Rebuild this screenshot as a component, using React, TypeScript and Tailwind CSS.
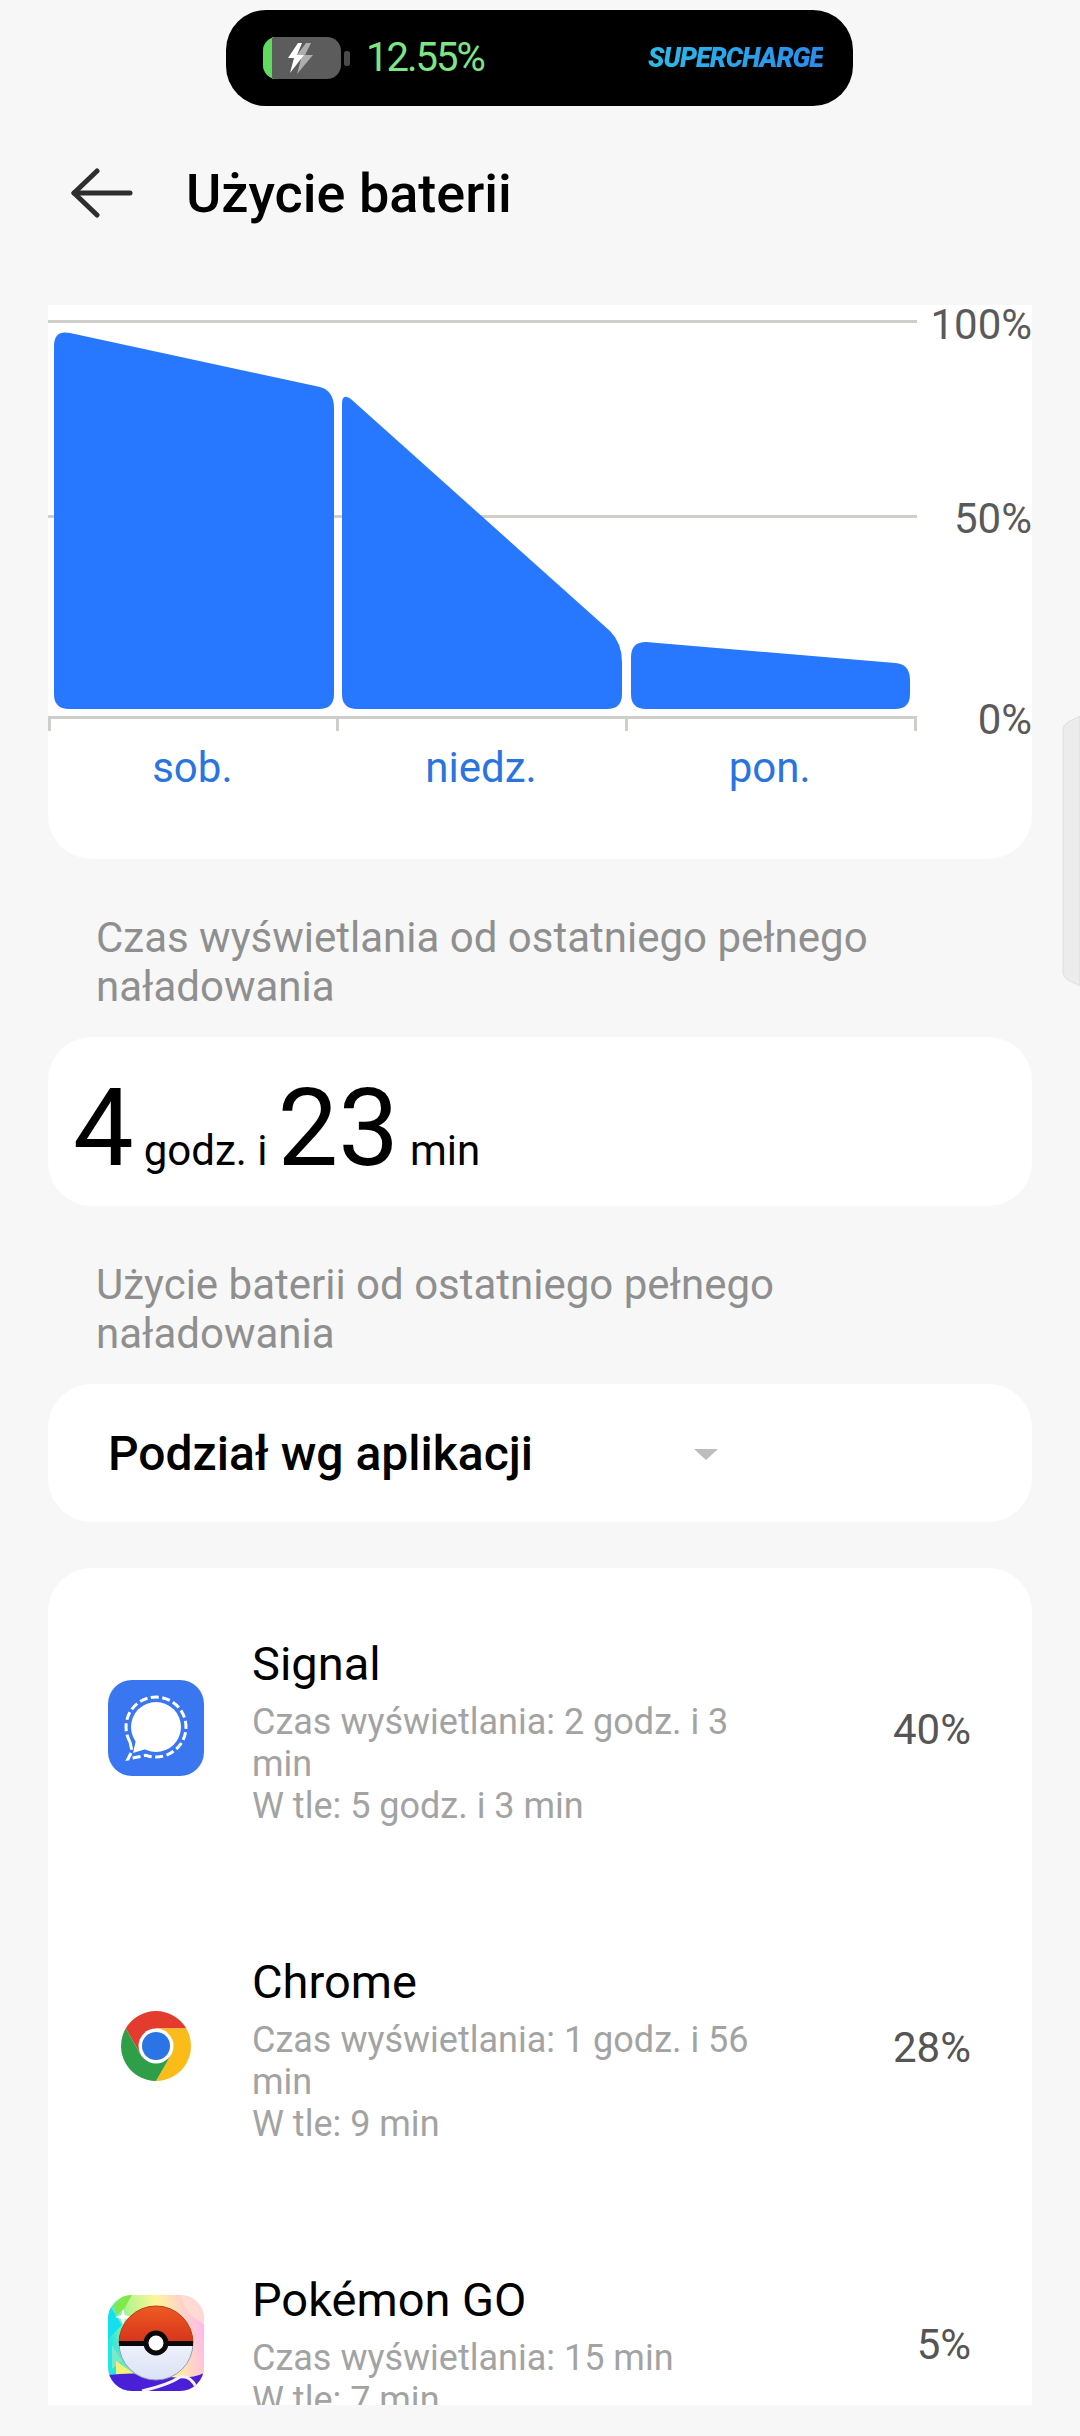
const apps = [
  { name: "Signal", sub: ["Czas wyświetlania: 2 godz. i 3 min", "W tle: 5 godz. i 3 min"], pct: "40%", icon: <SignalIcon /> },
  { name: "Chrome", sub: ["Czas wyświetlania: 1 godz. i 56 min", "W tle: 9 min"], pct: "28%", icon: <ChromeIcon /> },
  { name: "Pokémon GO", sub: ["Czas wyświetlania: 15 min", "W tle: 7 min"], pct: "5%", icon: <PokemonIcon /> },
];

function BackArrow() {
  return (
    <svg width="62" height="50" viewBox="0 0 62 50" fill="none" stroke="#2e2e2e" strokeWidth="5" strokeLinecap="round" strokeLinejoin="round">
      <path d="M3 25H59" />
      <path d="M26 3L3 25L26 47" />
    </svg>
  );
}

function ChargeIndicator() {
  return (
    <svg width="88" height="42" viewBox="0 0 88 42">
      <rect x="0" y="0" width="78" height="42" rx="14" fill="#5c5c5c" />
      <path d="M14 0A14 14 0 0 0 0 14V28A14 14 0 0 0 14 42H9V0Z" fill="#5fdc5f" />
      <rect x="81" y="14" width="6" height="15" rx="2.5" fill="#4a4a4a" />
      <path d="M37 6L25 22H32L28 37L44 18H36L42 6Z" fill="#ffffff" opacity="0.5" transform="translate(6 0)" />
      <path d="M35 6L25 21H31L27 36L41 18H34L39 6Z" fill="#ffffff" />
    </svg>
  );
}

function Chart() {
  return (
    <svg width="869" height="426" viewBox="48 305 869 426" className="block">
      <rect x="48" y="320" width="869" height="3" fill="#cfcfca" />
      <rect x="48" y="515" width="869" height="3" fill="#cfcfca" />
      <rect x="48" y="716" width="869" height="3" fill="#cfcfca" />
      <rect x="48" y="716" width="3" height="15" fill="#cfcfca" />
      <rect x="336" y="716" width="3" height="15" fill="#cfcfca" />
      <rect x="625" y="716" width="3" height="15" fill="#cfcfca" />
      <rect x="914" y="716" width="3" height="15" fill="#cfcfca" />
      <path d="M54 346Q54 330 70 333L320 387Q334 391 334 408L334 694Q334 709 319 709L69 709Q54 709 54 694Z" fill="#2878ff" />
      <path d="M342 404Q342 392 352 400L610 631Q622 643 622 662L622 694Q622 709 607 709L357 709Q342 709 342 694Z" fill="#2878ff" />
      <path d="M631 657Q631 642 646 642L895 663Q910 664 910 680L910 694Q910 709 895 709L646 709Q631 709 631 694Z" fill="#2878ff" />
    </svg>
  );
}

function SignalIcon() {
  return (
    <svg width="96" height="96" viewBox="0 0 96 96">
      <rect width="96" height="96" rx="24" fill="#3a76f0" />
      <circle cx="48" cy="47" r="25" fill="#ffffff" />
      <path d="M28 60L25 73L38 69Z" fill="#ffffff" />
      <path
        d="M22 62A30 30 0 1 1 38 75.3L20 79L24 71L22 62"
        fill="none"
        stroke="#ffffff"
        strokeWidth="3"
        strokeDasharray="8 3.5"
      />
    </svg>
  );
}

function ChromeIcon() {
  return (
    <svg width="96" height="96" viewBox="-48 -48 96 96">
      <path d="M-30.3 -17.5A35 35 0 0 1 30.3 -17.5L0 -17.5L-15.15 8.75Z" fill="#e33b2e" />
      <path d="M30.3 -17.5A35 35 0 0 1 0 35L15.15 8.75L0 -17.5Z" fill="#fbbc1a" />
      <path d="M0 35A35 35 0 0 1 -30.3 -17.5L-15.15 8.75L15.15 8.75Z" fill="#2f9e48" />
      <circle r="17.5" fill="#ffffff" />
      <circle r="14" fill="#2a74e6" />
    </svg>
  );
}

function PokemonIcon() {
  return (
    <svg width="96" height="96" viewBox="0 0 96 96">
      <defs>
        <linearGradient id="rainbow" x1="0" y1="0.4" x2="1" y2="0.2">
          <stop offset="0" stopColor="#22e6e6" />
          <stop offset="0.25" stopColor="#b4f58c" />
          <stop offset="0.55" stopColor="#fff59a" />
          <stop offset="1" stopColor="#ffb4f0" />
        </linearGradient>
        <linearGradient id="ballTop" x1="0" y1="0" x2="0" y2="1">
          <stop offset="0" stopColor="#ee5a24" />
          <stop offset="1" stopColor="#d5341a" />
        </linearGradient>
        <linearGradient id="ballBottom" x1="0" y1="0" x2="0" y2="1">
          <stop offset="0" stopColor="#f0f1f9" />
          <stop offset="1" stopColor="#d9e2f7" />
        </linearGradient>
        <clipPath id="pokeClip">
          <rect width="96" height="96" rx="24" />
        </clipPath>
      </defs>
      <g clipPath="url(#pokeClip)">
        <rect width="96" height="96" fill="url(#rainbow)" />
        <path d="M6 10L16 0H24L16 14L8 20Z" fill="#7fe84a" />
        <path d="M0 8L14 30L0 44Z" fill="#12e0ee" />
        <path d="M4 50L14 66L4 74Z" fill="#7ce8c8" />
        <path d="M8 66L28 80L8 84Z" fill="#f4f07a" />
        <path d="M72 0H96V30L80 18Z" fill="#ffe0d0" opacity="0.8" />
        <path d="M0 80Q30 76 62 82Q84 84 96 78V96H0Z" fill="#4a1fd8" />
        <path d="M34 96Q60 90 72 82Q82 80 88 92" fill="none" stroke="#f4f2ff" strokeWidth="3" />
      </g>
      <path d="M15 14L17 20L23 22L17 24L15 30L13 24L7 22L13 20Z" fill="#ffffff" />
      <path d="M11 48A37 37 0 0 1 85 48Z" fill="url(#ballTop)" stroke="#b83a10" strokeWidth="1" />
      <path d="M11 48A37 37 0 0 0 85 48Z" fill="url(#ballBottom)" stroke="#9a9ab8" strokeWidth="1" />
      <rect x="11" y="46" width="74" height="5" fill="#0a0a0a" />
      <circle cx="48" cy="48" r="10" fill="#ffffff" stroke="#0a0a0a" strokeWidth="5" />
    </svg>
  );
}

function AppRow({ name, sub, pct, icon }: (typeof apps)[number]) {
  return (
    <div className="flex items-center">
      <div className="w-[96px] h-[96px] ml-[60px] shrink-0">{icon}</div>
      <div className="w-[520px] ml-[48px] pt-[70px] pb-[60px]">
        <div className="mb-[12px] text-[47px] leading-[50px] text-black">{name}</div>
        <div className="text-[36px] leading-[42px] text-[#a3a3a3]">
          {sub.map((line) => (
            <div key={line}>{line}</div>
          ))}
        </div>
      </div>
      <div className="ml-auto mr-[61px] pt-[2px] text-[42px] text-[#555555]">{pct}</div>
    </div>
  );
}

export default function App() {
  return (
    <div className="relative w-[1080px] h-[2436px] overflow-hidden bg-[#f7f7f7] font-[Roboto,sans-serif]">
      <div className="pt-[10px] pl-[226px]">
        <div className="flex items-center w-[627px] h-[96px] rounded-[40px] bg-black pl-[37px] pr-[30px]">
          <ChargeIndicator />
          <span className="ml-[15px] text-[40px] text-[#7fe583] tracking-[-2px]">12.55%</span>
          <span className="ml-auto text-[27px] font-black italic tracking-[-1px] text-transparent bg-clip-text bg-gradient-to-r from-[#2cbce8] to-[#2a8cec]">
            SUPERCHARGE
          </span>
        </div>
      </div>

      <div className="flex items-center h-[60px] mt-[57px] pl-[71px]">
        <BackArrow />
        <h1 className="ml-[53px] text-[54px] font-medium text-black">Użycie baterii</h1>
      </div>

      <div className="mx-[48px]">
        <div className="flex h-[554px] mt-[82px] bg-white rounded-b-[44px]">
          <div className="w-[869px]">
            <Chart />
            <div className="grid grid-cols-3 w-[866px] mt-[14px] text-center text-[42px] leading-[46px] text-[#2a74e0]">
              <span>sob.</span>
              <span>niedz.</span>
              <span>pon.</span>
            </div>
          </div>
          <div className="flex flex-col items-end flex-1 text-[42px] leading-[40px] text-[#5a5a5a]">
            <span>100%</span>
            <span className="mt-[154px]">50%</span>
            <span className="mt-[161px]">0%</span>
          </div>
        </div>

        <p className="pl-[48px] pr-[60px] pt-[54px] pb-[26px] text-[42px] leading-[49px] text-[#8f8f8f]">
          Czas wyświetlania od ostatniego pełnego naładowania
        </p>

        <div className="flex items-baseline h-[169px] pl-[25px] pt-[31px] bg-white rounded-[44px] text-black">
          <span className="text-[108px] leading-[120px]">4</span>
          <span className="ml-[10px] text-[42px]">godz. i</span>
          <span className="ml-[10px] text-[108px] leading-[120px]">23</span>
          <span className="ml-[11px] text-[42px]">min</span>
        </div>

        <p className="pl-[48px] pr-[60px] pt-[54px] pb-[26px] text-[42px] leading-[49px] text-[#8f8f8f]">
          Użycie baterii od ostatniego pełnego naładowania
        </p>

        <div className="flex items-center h-[138px] pl-[60px] pt-[2px] bg-white rounded-[44px]">
          <span className="text-[48px] font-medium text-black">Podział wg aplikacji</span>
          <span className="ml-[161px] w-0 h-0 border-x-[12px] border-x-transparent border-t-[11px] border-t-[#bdbdbd]" />
        </div>

        <div className="h-[837px] mt-[46px] pt-[1px] bg-white rounded-t-[44px] overflow-hidden">
          {apps.map((app) => (
            <AppRow key={app.name} {...app} />
          ))}
        </div>
      </div>

      <svg width="18" height="270" viewBox="0 0 18 270" className="absolute top-[716px] right-0">
        <path d="M18 0L6 6Q1 9 1 14V256Q1 261 6 264L18 270Z" fill="#ececec" stroke="#dddddd" />
      </svg>
    </div>
  );
}
